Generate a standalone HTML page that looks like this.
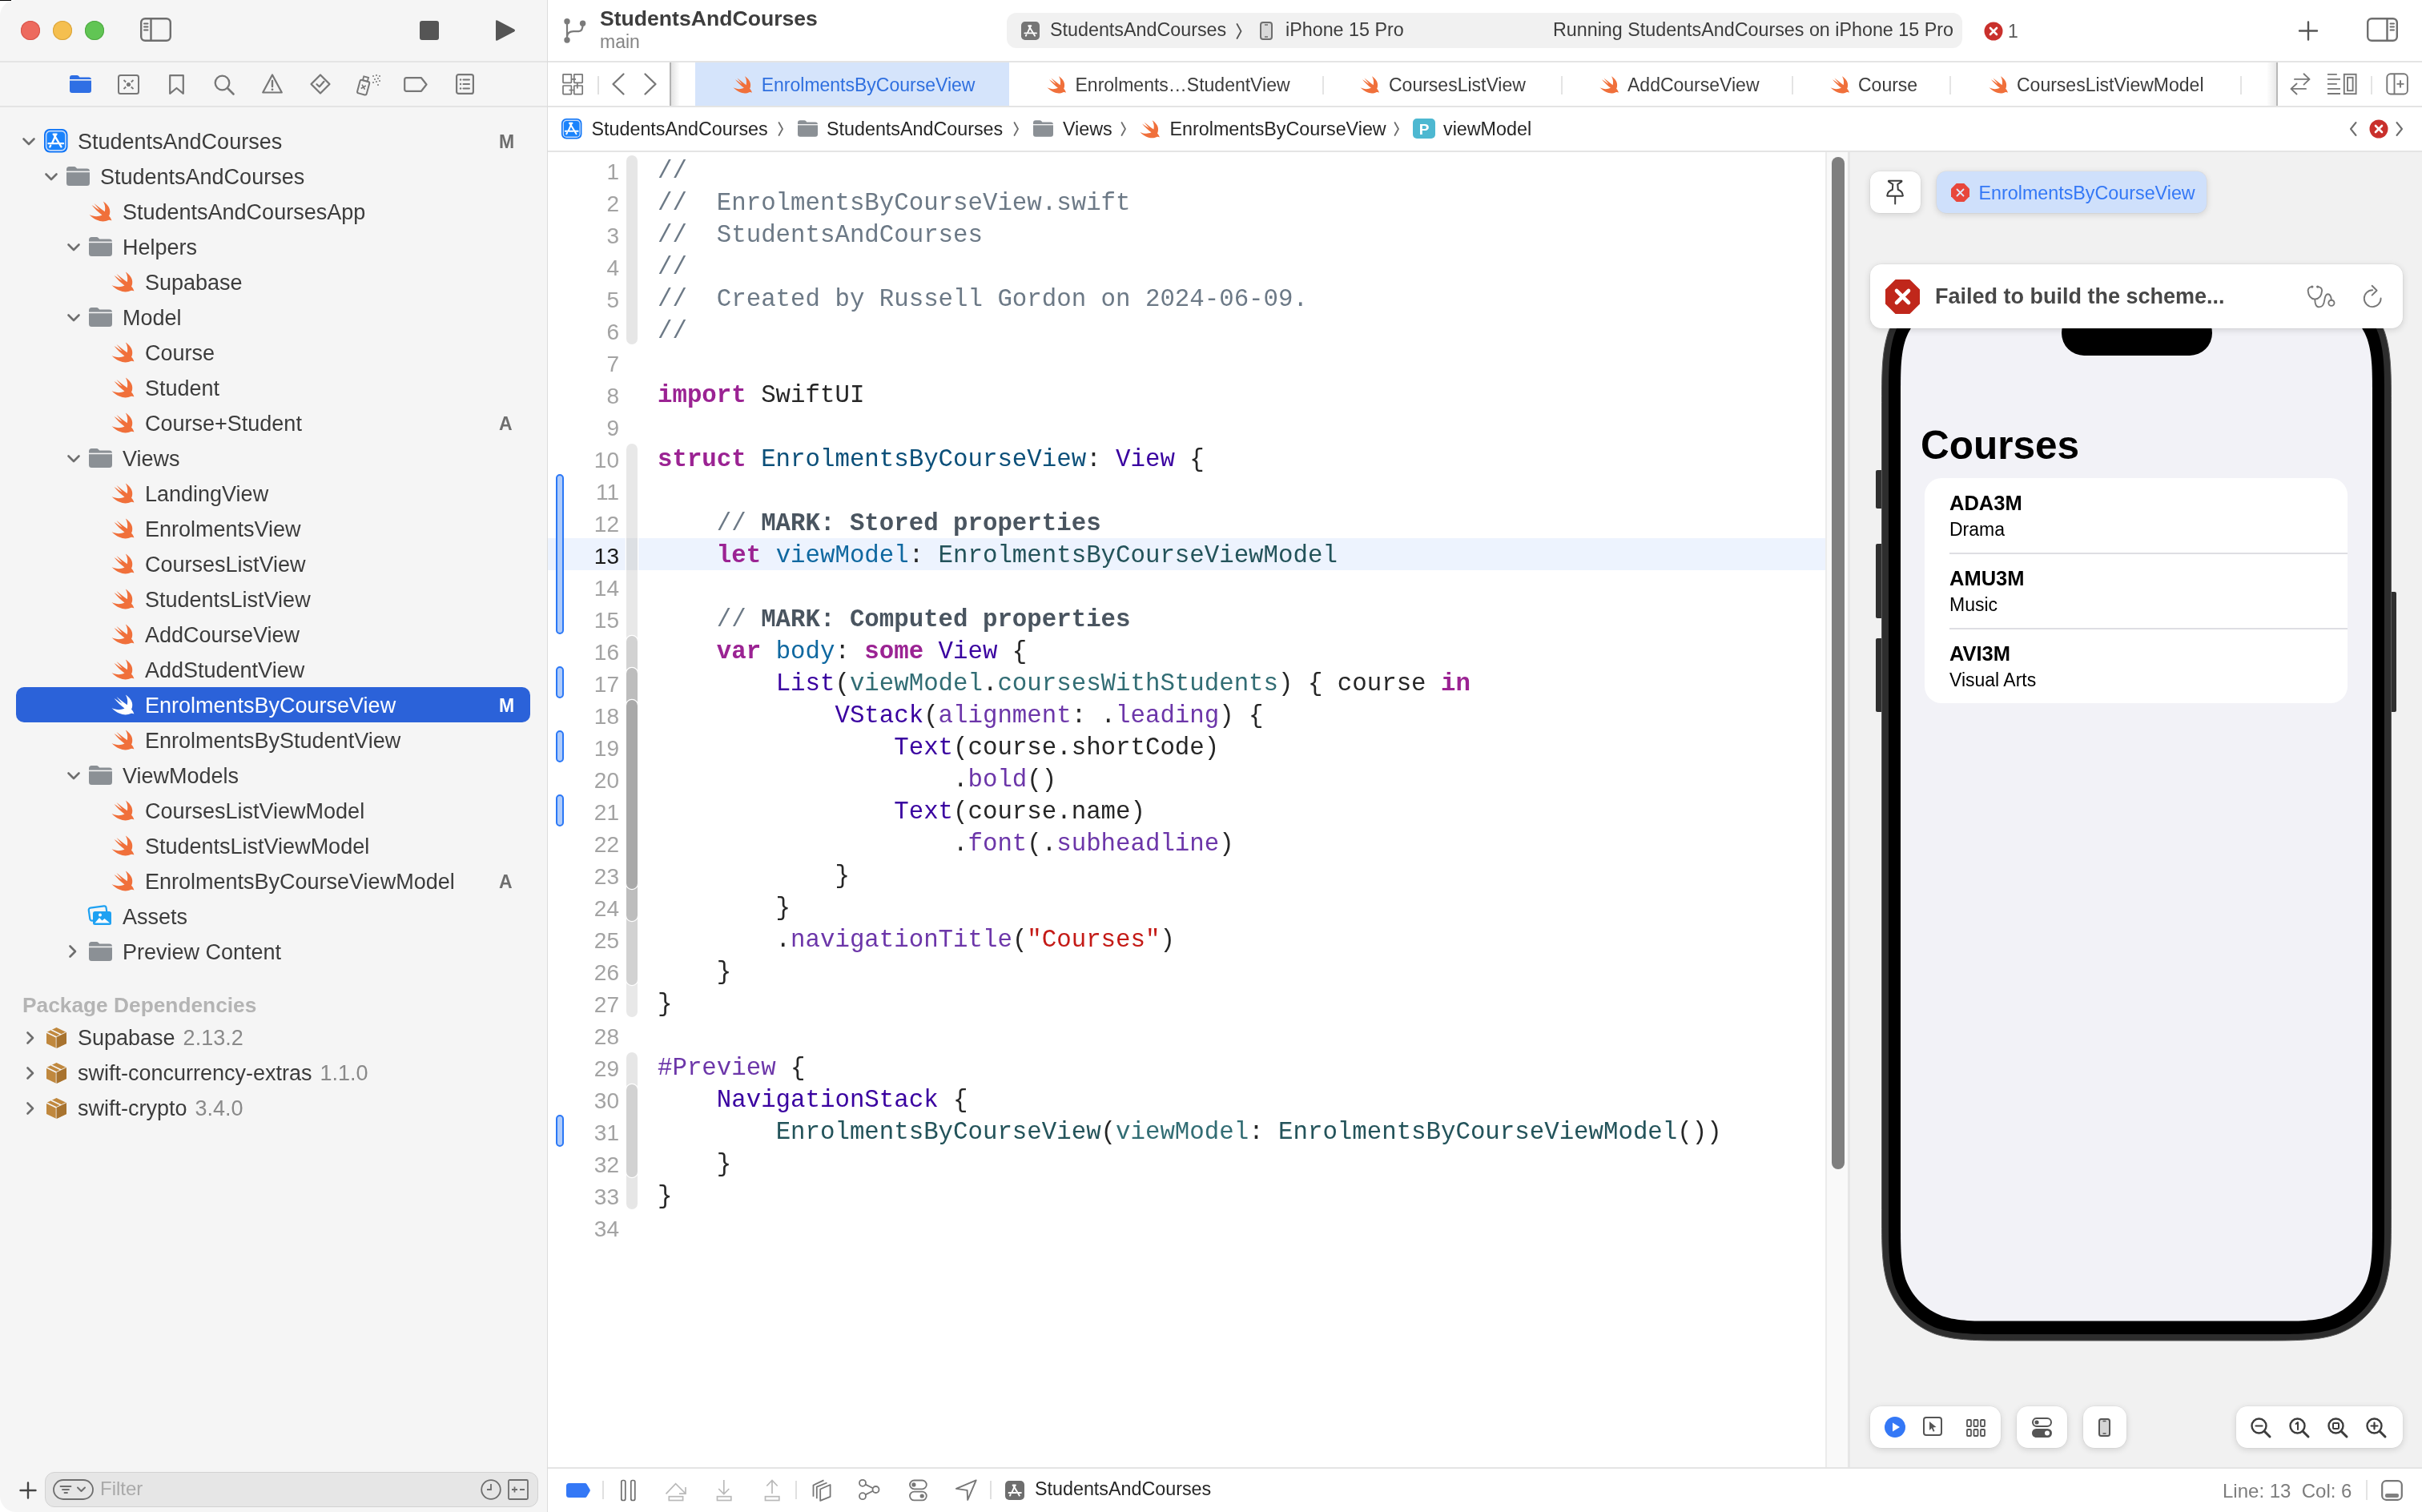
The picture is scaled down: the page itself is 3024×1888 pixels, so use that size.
<!DOCTYPE html><html><head><meta charset="utf-8"><style>
*{margin:0;padding:0;box-sizing:border-box}
html,body{width:3024px;height:1888px;overflow:hidden;background:#fff}
body{position:relative;font-family:"Liberation Sans", sans-serif;color:#262626;-webkit-font-smoothing:antialiased}
#root{position:absolute;left:0;top:0;width:3024px;height:1888px;will-change:transform}
.a{position:absolute}
.t{position:absolute;white-space:pre;font-family:"Liberation Sans", sans-serif}
.m{font-family:"Liberation Mono", monospace}
svg{position:absolute;overflow:visible}
</style></head><body><div id="root">
<div class="a" style="left:0px;top:0px;width:684px;height:1888px;background:#f5f5f5;border-top-left-radius:20px;border-bottom-left-radius:20px;"></div>
<div class="a" style="left:683px;top:0px;width:1px;height:1888px;background:#dcdcdc"></div>
<div class="a" style="left:0px;top:0px;width:14px;height:1px;background:#000"></div>
<div class="a" style="left:0px;top:76px;width:683px;height:2px;background:#e4e4e4"></div>
<div class="a" style="left:0px;top:132px;width:683px;height:2px;background:#e4e4e4"></div>
<div class="a" style="left:26px;top:26px;width:24px;height:24px;background:#ed6a5e;border-radius:50%;box-shadow:inset 0 0 0 1px #d6544a"></div>
<div class="a" style="left:66px;top:26px;width:24px;height:24px;background:#f5bf4f;border-radius:50%;box-shadow:inset 0 0 0 1px #d9a33b"></div>
<div class="a" style="left:106px;top:26px;width:24px;height:24px;background:#61c554;border-radius:50%;box-shadow:inset 0 0 0 1px #4fa843"></div>
<svg style="left:175px;top:22px;" width="39" height="30" viewBox="0 0 39 30"><rect x="1.2" y="1.2" width="36.6" height="27.6" rx="5" fill="none" stroke="#6e6e6e" stroke-width="2.4"/><path d="M13.5 1.5V28.5" stroke="#6e6e6e" stroke-width="2.4"/><path d="M5 7.5H9.5M5 11.5H9.5M5 15.5H9.5" stroke="#6e6e6e" stroke-width="2" stroke-linecap="round"/></svg>
<div class="a" style="left:524px;top:26px;width:24px;height:24px;background:#555;border-radius:3px"></div>
<svg style="left:617px;top:24px;" width="27" height="28" viewBox="0 0 27 28"><path d="M2 2.5Q2 0.5 4 1.5L25 12.5Q27 14 25 15.5L4 26.5Q2 27.5 2 25.5Z" fill="#555"/></svg>
<svg style="left:87px;top:94px;" width="27" height="22" viewBox="0 0 27 22"><path fill="#2f6fe4" d="M0 3Q0 0 3 0H9Q10.5 0 11.5 1.2L12.5 2.4H24Q27 2.4 27 5.4V19Q27 22 24 22H3Q0 22 0 19Z"/><rect y="5" width="27" height="1.6" fill="#f5f5f5"/></svg>
<svg style="left:147px;top:93px;" width="27" height="25" viewBox="0 0 27 25"><rect x="1" y="1" width="25" height="23" rx="2.5" fill="none" stroke="#777" stroke-width="2"/><path d="M7.5 7L19.5 18M19.5 7L7.5 18" stroke="#777" stroke-width="1.8"/><circle cx="13.5" cy="12.5" r="3" fill="#777"/><rect x="10" y="9" width="7" height="7" fill="#f5f5f5"/><circle cx="13.5" cy="12.5" r="2.6" fill="#777"/></svg>
<svg style="left:211px;top:93px;" width="19" height="25" viewBox="0 0 19 25"><path d="M1.2 1.2H17.8V23.8L9.5 17L1.2 23.8Z" fill="none" stroke="#777" stroke-width="2.2" stroke-linejoin="round"/></svg>
<svg style="left:267px;top:93px;" width="26" height="26" viewBox="0 0 26 26"><circle cx="10.5" cy="10.5" r="8.8" fill="none" stroke="#777" stroke-width="2.3"/><path d="M17 17L24.5 24.5" stroke="#777" stroke-width="2.6" stroke-linecap="round"/></svg>
<svg style="left:327px;top:92px;" width="26" height="25" viewBox="0 0 26 25"><path d="M13 1.5L24.8 23.5H1.2Z" fill="none" stroke="#777" stroke-width="2.2" stroke-linejoin="round"/><path d="M13 9V16" stroke="#777" stroke-width="2.4" stroke-linecap="round"/><circle cx="13" cy="19.8" r="1.4" fill="#777"/></svg>
<svg style="left:387px;top:92px;" width="26" height="26" viewBox="0 0 26 26"><path d="M13 1.5L24.5 13L13 24.5L1.5 13Z" fill="none" stroke="#777" stroke-width="2.2" stroke-linejoin="round"/><path d="M8.5 13.2L11.8 16.3L17.5 9.8" fill="none" stroke="#777" stroke-width="2.2" stroke-linecap="round" stroke-linejoin="round"/></svg>
<svg style="left:445px;top:92px;" width="31" height="27" viewBox="0 0 31 27"><g transform="rotate(15 10 16)"><rect x="3" y="9" width="12" height="17" rx="2" fill="none" stroke="#777" stroke-width="2"/><rect x="6" y="4" width="6" height="5" fill="none" stroke="#777" stroke-width="1.8"/><path d="M6.5 14.5L11.5 19.5M11.5 14.5L6.5 19.5" stroke="#777" stroke-width="1.6"/></g><g fill="#777"><circle cx="21" cy="3" r="1"/><circle cx="25" cy="2" r="1"/><circle cx="29" cy="3" r="1"/><circle cx="23" cy="7" r="1"/><circle cx="27" cy="6" r="1"/><circle cx="21" cy="11" r="1"/><circle cx="25" cy="10" r="1"/><circle cx="29" cy="9" r="1"/><circle cx="27" cy="14" r="1"/></g></svg>
<svg style="left:504px;top:96px;" width="30" height="19" viewBox="0 0 30 19"><path d="M3.5 1.2H22L28.5 9.5L22 17.8H3.5Q1.2 17.8 1.2 15.5V3.5Q1.2 1.2 3.5 1.2Z" fill="none" stroke="#777" stroke-width="2.2" stroke-linejoin="round"/></svg>
<svg style="left:569px;top:92px;" width="23" height="26" viewBox="0 0 23 26"><rect x="1.1" y="1.1" width="20.8" height="23.8" rx="2.5" fill="none" stroke="#777" stroke-width="2.2"/><g fill="#777"><circle cx="6" cy="7.5" r="1.2"/><circle cx="6" cy="13" r="1.2"/><circle cx="6" cy="18.5" r="1.2"/></g><path d="M9.5 7.5H17M9.5 13H17M9.5 18.5H17" stroke="#777" stroke-width="2" stroke-linecap="round"/></svg>
<svg style="left:28px;top:171.5px;" width="16" height="10" viewBox="0 0 16 10"><path d="M1.5 1.5L8 8L14.5 1.5" fill="none" stroke="#6e6e6e" stroke-width="2.6" stroke-linecap="round" stroke-linejoin="round"/></svg>
<svg style="left:55px;top:161px;" width="29" height="29" viewBox="0 0 29 29"><g transform="scale(1.0)"><rect x="0" y="0" width="29.5" height="29.5" rx="7" fill="#0b72f6"/><rect x="2.6" y="2.6" width="24.3" height="24.3" rx="5" fill="#1a83fc" stroke="#c4dbfb" stroke-width="1.6"/><g stroke="#fff" stroke-width="2.3" stroke-linecap="round" fill="none"><path d="M12.3 7.2L21.5 22.3"/><path d="M14.8 7.2L10.3 17.3"/><path d="M8.2 20.6L7.3 22.4"/><path d="M5.5 18.2H16.8M19 18.2H24"/><path d="M11.6 6.6H15.6"/></g></g></svg>
<div class="t" style="left:97px;top:164.1px;font-size:27px;line-height:27px;color:#3c3c3c;">StudentsAndCourses</div>
<div class="t" style="left:623px;top:165.5px;font-size:23px;line-height:23px;color:#6e6e6e;font-weight:bold">M</div>
<svg style="left:56px;top:215.5px;" width="16" height="10" viewBox="0 0 16 10"><path d="M1.5 1.5L8 8L14.5 1.5" fill="none" stroke="#6e6e6e" stroke-width="2.6" stroke-linecap="round" stroke-linejoin="round"/></svg>
<svg style="left:83px;top:208px;" width="29" height="24" viewBox="0 0 29 24"><path fill="#8b9095" d="M0 3.5Q0 0 3.5 0H9.5Q11 0 12 1.2L13.2 2.6H25.5Q29 2.6 29 6V20.5Q29 24 25.5 24H3.5Q0 24 0 20.5Z"/><rect x="0" y="5.6" width="29" height="1.6" fill="#f5f5f5"/></svg>
<div class="t" style="left:125px;top:208.1px;font-size:27px;line-height:27px;color:#3c3c3c;">StudentsAndCourses</div>
<svg style="left:111px;top:250.8px;" width="28.5" height="25.5" viewBox="0 0 28.5 25.5"><path fill="#f0703b" d="M17.8 0.4C22.5 3.5 27 8.5 26.2 14.5C26 16.5 25.5 18 25 18.8C26.8 20.5 27.8 22.5 28.4 24.6C27 23.6 25.5 23.4 24.2 23.9C19 26.5 10 26.5 0.5 17C5.5 19.5 11.5 20 16.5 17.5C12 14 7 9.5 3.5 5C7.5 7.5 11 10 13.5 11.5C11 8.5 8.5 5.5 6.5 3C11 6.5 16 10.5 19.8 13.2C20.8 9 20.2 4 17.8 0.4Z"/></svg>
<div class="t" style="left:153px;top:252.1px;font-size:27px;line-height:27px;color:#3c3c3c;">StudentsAndCoursesApp</div>
<svg style="left:84px;top:303.5px;" width="16" height="10" viewBox="0 0 16 10"><path d="M1.5 1.5L8 8L14.5 1.5" fill="none" stroke="#6e6e6e" stroke-width="2.6" stroke-linecap="round" stroke-linejoin="round"/></svg>
<svg style="left:111px;top:296px;" width="29" height="24" viewBox="0 0 29 24"><path fill="#8b9095" d="M0 3.5Q0 0 3.5 0H9.5Q11 0 12 1.2L13.2 2.6H25.5Q29 2.6 29 6V20.5Q29 24 25.5 24H3.5Q0 24 0 20.5Z"/><rect x="0" y="5.6" width="29" height="1.6" fill="#f5f5f5"/></svg>
<div class="t" style="left:153px;top:296.1px;font-size:27px;line-height:27px;color:#3c3c3c;">Helpers</div>
<svg style="left:139px;top:338.8px;" width="28.5" height="25.5" viewBox="0 0 28.5 25.5"><path fill="#f0703b" d="M17.8 0.4C22.5 3.5 27 8.5 26.2 14.5C26 16.5 25.5 18 25 18.8C26.8 20.5 27.8 22.5 28.4 24.6C27 23.6 25.5 23.4 24.2 23.9C19 26.5 10 26.5 0.5 17C5.5 19.5 11.5 20 16.5 17.5C12 14 7 9.5 3.5 5C7.5 7.5 11 10 13.5 11.5C11 8.5 8.5 5.5 6.5 3C11 6.5 16 10.5 19.8 13.2C20.8 9 20.2 4 17.8 0.4Z"/></svg>
<div class="t" style="left:181px;top:340.1px;font-size:27px;line-height:27px;color:#3c3c3c;">Supabase</div>
<svg style="left:84px;top:391.5px;" width="16" height="10" viewBox="0 0 16 10"><path d="M1.5 1.5L8 8L14.5 1.5" fill="none" stroke="#6e6e6e" stroke-width="2.6" stroke-linecap="round" stroke-linejoin="round"/></svg>
<svg style="left:111px;top:384px;" width="29" height="24" viewBox="0 0 29 24"><path fill="#8b9095" d="M0 3.5Q0 0 3.5 0H9.5Q11 0 12 1.2L13.2 2.6H25.5Q29 2.6 29 6V20.5Q29 24 25.5 24H3.5Q0 24 0 20.5Z"/><rect x="0" y="5.6" width="29" height="1.6" fill="#f5f5f5"/></svg>
<div class="t" style="left:153px;top:384.1px;font-size:27px;line-height:27px;color:#3c3c3c;">Model</div>
<svg style="left:139px;top:426.8px;" width="28.5" height="25.5" viewBox="0 0 28.5 25.5"><path fill="#f0703b" d="M17.8 0.4C22.5 3.5 27 8.5 26.2 14.5C26 16.5 25.5 18 25 18.8C26.8 20.5 27.8 22.5 28.4 24.6C27 23.6 25.5 23.4 24.2 23.9C19 26.5 10 26.5 0.5 17C5.5 19.5 11.5 20 16.5 17.5C12 14 7 9.5 3.5 5C7.5 7.5 11 10 13.5 11.5C11 8.5 8.5 5.5 6.5 3C11 6.5 16 10.5 19.8 13.2C20.8 9 20.2 4 17.8 0.4Z"/></svg>
<div class="t" style="left:181px;top:428.1px;font-size:27px;line-height:27px;color:#3c3c3c;">Course</div>
<svg style="left:139px;top:470.8px;" width="28.5" height="25.5" viewBox="0 0 28.5 25.5"><path fill="#f0703b" d="M17.8 0.4C22.5 3.5 27 8.5 26.2 14.5C26 16.5 25.5 18 25 18.8C26.8 20.5 27.8 22.5 28.4 24.6C27 23.6 25.5 23.4 24.2 23.9C19 26.5 10 26.5 0.5 17C5.5 19.5 11.5 20 16.5 17.5C12 14 7 9.5 3.5 5C7.5 7.5 11 10 13.5 11.5C11 8.5 8.5 5.5 6.5 3C11 6.5 16 10.5 19.8 13.2C20.8 9 20.2 4 17.8 0.4Z"/></svg>
<div class="t" style="left:181px;top:472.1px;font-size:27px;line-height:27px;color:#3c3c3c;">Student</div>
<svg style="left:139px;top:514.8px;" width="28.5" height="25.5" viewBox="0 0 28.5 25.5"><path fill="#f0703b" d="M17.8 0.4C22.5 3.5 27 8.5 26.2 14.5C26 16.5 25.5 18 25 18.8C26.8 20.5 27.8 22.5 28.4 24.6C27 23.6 25.5 23.4 24.2 23.9C19 26.5 10 26.5 0.5 17C5.5 19.5 11.5 20 16.5 17.5C12 14 7 9.5 3.5 5C7.5 7.5 11 10 13.5 11.5C11 8.5 8.5 5.5 6.5 3C11 6.5 16 10.5 19.8 13.2C20.8 9 20.2 4 17.8 0.4Z"/></svg>
<div class="t" style="left:181px;top:516.1px;font-size:27px;line-height:27px;color:#3c3c3c;">Course+Student</div>
<div class="t" style="left:623px;top:517.5px;font-size:23px;line-height:23px;color:#6e6e6e;font-weight:bold">A</div>
<svg style="left:84px;top:567.5px;" width="16" height="10" viewBox="0 0 16 10"><path d="M1.5 1.5L8 8L14.5 1.5" fill="none" stroke="#6e6e6e" stroke-width="2.6" stroke-linecap="round" stroke-linejoin="round"/></svg>
<svg style="left:111px;top:560px;" width="29" height="24" viewBox="0 0 29 24"><path fill="#8b9095" d="M0 3.5Q0 0 3.5 0H9.5Q11 0 12 1.2L13.2 2.6H25.5Q29 2.6 29 6V20.5Q29 24 25.5 24H3.5Q0 24 0 20.5Z"/><rect x="0" y="5.6" width="29" height="1.6" fill="#f5f5f5"/></svg>
<div class="t" style="left:153px;top:560.1px;font-size:27px;line-height:27px;color:#3c3c3c;">Views</div>
<svg style="left:139px;top:602.8px;" width="28.5" height="25.5" viewBox="0 0 28.5 25.5"><path fill="#f0703b" d="M17.8 0.4C22.5 3.5 27 8.5 26.2 14.5C26 16.5 25.5 18 25 18.8C26.8 20.5 27.8 22.5 28.4 24.6C27 23.6 25.5 23.4 24.2 23.9C19 26.5 10 26.5 0.5 17C5.5 19.5 11.5 20 16.5 17.5C12 14 7 9.5 3.5 5C7.5 7.5 11 10 13.5 11.5C11 8.5 8.5 5.5 6.5 3C11 6.5 16 10.5 19.8 13.2C20.8 9 20.2 4 17.8 0.4Z"/></svg>
<div class="t" style="left:181px;top:604.1px;font-size:27px;line-height:27px;color:#3c3c3c;">LandingView</div>
<svg style="left:139px;top:646.8px;" width="28.5" height="25.5" viewBox="0 0 28.5 25.5"><path fill="#f0703b" d="M17.8 0.4C22.5 3.5 27 8.5 26.2 14.5C26 16.5 25.5 18 25 18.8C26.8 20.5 27.8 22.5 28.4 24.6C27 23.6 25.5 23.4 24.2 23.9C19 26.5 10 26.5 0.5 17C5.5 19.5 11.5 20 16.5 17.5C12 14 7 9.5 3.5 5C7.5 7.5 11 10 13.5 11.5C11 8.5 8.5 5.5 6.5 3C11 6.5 16 10.5 19.8 13.2C20.8 9 20.2 4 17.8 0.4Z"/></svg>
<div class="t" style="left:181px;top:648.1px;font-size:27px;line-height:27px;color:#3c3c3c;">EnrolmentsView</div>
<svg style="left:139px;top:690.8px;" width="28.5" height="25.5" viewBox="0 0 28.5 25.5"><path fill="#f0703b" d="M17.8 0.4C22.5 3.5 27 8.5 26.2 14.5C26 16.5 25.5 18 25 18.8C26.8 20.5 27.8 22.5 28.4 24.6C27 23.6 25.5 23.4 24.2 23.9C19 26.5 10 26.5 0.5 17C5.5 19.5 11.5 20 16.5 17.5C12 14 7 9.5 3.5 5C7.5 7.5 11 10 13.5 11.5C11 8.5 8.5 5.5 6.5 3C11 6.5 16 10.5 19.8 13.2C20.8 9 20.2 4 17.8 0.4Z"/></svg>
<div class="t" style="left:181px;top:692.1px;font-size:27px;line-height:27px;color:#3c3c3c;">CoursesListView</div>
<svg style="left:139px;top:734.8px;" width="28.5" height="25.5" viewBox="0 0 28.5 25.5"><path fill="#f0703b" d="M17.8 0.4C22.5 3.5 27 8.5 26.2 14.5C26 16.5 25.5 18 25 18.8C26.8 20.5 27.8 22.5 28.4 24.6C27 23.6 25.5 23.4 24.2 23.9C19 26.5 10 26.5 0.5 17C5.5 19.5 11.5 20 16.5 17.5C12 14 7 9.5 3.5 5C7.5 7.5 11 10 13.5 11.5C11 8.5 8.5 5.5 6.5 3C11 6.5 16 10.5 19.8 13.2C20.8 9 20.2 4 17.8 0.4Z"/></svg>
<div class="t" style="left:181px;top:736.1px;font-size:27px;line-height:27px;color:#3c3c3c;">StudentsListView</div>
<svg style="left:139px;top:778.8px;" width="28.5" height="25.5" viewBox="0 0 28.5 25.5"><path fill="#f0703b" d="M17.8 0.4C22.5 3.5 27 8.5 26.2 14.5C26 16.5 25.5 18 25 18.8C26.8 20.5 27.8 22.5 28.4 24.6C27 23.6 25.5 23.4 24.2 23.9C19 26.5 10 26.5 0.5 17C5.5 19.5 11.5 20 16.5 17.5C12 14 7 9.5 3.5 5C7.5 7.5 11 10 13.5 11.5C11 8.5 8.5 5.5 6.5 3C11 6.5 16 10.5 19.8 13.2C20.8 9 20.2 4 17.8 0.4Z"/></svg>
<div class="t" style="left:181px;top:780.1px;font-size:27px;line-height:27px;color:#3c3c3c;">AddCourseView</div>
<svg style="left:139px;top:822.8px;" width="28.5" height="25.5" viewBox="0 0 28.5 25.5"><path fill="#f0703b" d="M17.8 0.4C22.5 3.5 27 8.5 26.2 14.5C26 16.5 25.5 18 25 18.8C26.8 20.5 27.8 22.5 28.4 24.6C27 23.6 25.5 23.4 24.2 23.9C19 26.5 10 26.5 0.5 17C5.5 19.5 11.5 20 16.5 17.5C12 14 7 9.5 3.5 5C7.5 7.5 11 10 13.5 11.5C11 8.5 8.5 5.5 6.5 3C11 6.5 16 10.5 19.8 13.2C20.8 9 20.2 4 17.8 0.4Z"/></svg>
<div class="t" style="left:181px;top:824.1px;font-size:27px;line-height:27px;color:#3c3c3c;">AddStudentView</div>
<div class="a" style="left:20px;top:858px;width:642px;height:44px;background:#2b62d9;border-radius:10px"></div>
<svg style="left:139px;top:866.8px;" width="28.5" height="25.5" viewBox="0 0 28.5 25.5"><path fill="#fff" d="M17.8 0.4C22.5 3.5 27 8.5 26.2 14.5C26 16.5 25.5 18 25 18.8C26.8 20.5 27.8 22.5 28.4 24.6C27 23.6 25.5 23.4 24.2 23.9C19 26.5 10 26.5 0.5 17C5.5 19.5 11.5 20 16.5 17.5C12 14 7 9.5 3.5 5C7.5 7.5 11 10 13.5 11.5C11 8.5 8.5 5.5 6.5 3C11 6.5 16 10.5 19.8 13.2C20.8 9 20.2 4 17.8 0.4Z"/></svg>
<div class="t" style="left:181px;top:868.1px;font-size:27px;line-height:27px;color:#fff;">EnrolmentsByCourseView</div>
<div class="t" style="left:623px;top:869.5px;font-size:23px;line-height:23px;color:#fff;font-weight:bold">M</div>
<svg style="left:139px;top:910.8px;" width="28.5" height="25.5" viewBox="0 0 28.5 25.5"><path fill="#f0703b" d="M17.8 0.4C22.5 3.5 27 8.5 26.2 14.5C26 16.5 25.5 18 25 18.8C26.8 20.5 27.8 22.5 28.4 24.6C27 23.6 25.5 23.4 24.2 23.9C19 26.5 10 26.5 0.5 17C5.5 19.5 11.5 20 16.5 17.5C12 14 7 9.5 3.5 5C7.5 7.5 11 10 13.5 11.5C11 8.5 8.5 5.5 6.5 3C11 6.5 16 10.5 19.8 13.2C20.8 9 20.2 4 17.8 0.4Z"/></svg>
<div class="t" style="left:181px;top:912.1px;font-size:27px;line-height:27px;color:#3c3c3c;">EnrolmentsByStudentView</div>
<svg style="left:84px;top:963.5px;" width="16" height="10" viewBox="0 0 16 10"><path d="M1.5 1.5L8 8L14.5 1.5" fill="none" stroke="#6e6e6e" stroke-width="2.6" stroke-linecap="round" stroke-linejoin="round"/></svg>
<svg style="left:111px;top:956px;" width="29" height="24" viewBox="0 0 29 24"><path fill="#8b9095" d="M0 3.5Q0 0 3.5 0H9.5Q11 0 12 1.2L13.2 2.6H25.5Q29 2.6 29 6V20.5Q29 24 25.5 24H3.5Q0 24 0 20.5Z"/><rect x="0" y="5.6" width="29" height="1.6" fill="#f5f5f5"/></svg>
<div class="t" style="left:153px;top:956.1px;font-size:27px;line-height:27px;color:#3c3c3c;">ViewModels</div>
<svg style="left:139px;top:998.8px;" width="28.5" height="25.5" viewBox="0 0 28.5 25.5"><path fill="#f0703b" d="M17.8 0.4C22.5 3.5 27 8.5 26.2 14.5C26 16.5 25.5 18 25 18.8C26.8 20.5 27.8 22.5 28.4 24.6C27 23.6 25.5 23.4 24.2 23.9C19 26.5 10 26.5 0.5 17C5.5 19.5 11.5 20 16.5 17.5C12 14 7 9.5 3.5 5C7.5 7.5 11 10 13.5 11.5C11 8.5 8.5 5.5 6.5 3C11 6.5 16 10.5 19.8 13.2C20.8 9 20.2 4 17.8 0.4Z"/></svg>
<div class="t" style="left:181px;top:1000.1px;font-size:27px;line-height:27px;color:#3c3c3c;">CoursesListViewModel</div>
<svg style="left:139px;top:1042.8px;" width="28.5" height="25.5" viewBox="0 0 28.5 25.5"><path fill="#f0703b" d="M17.8 0.4C22.5 3.5 27 8.5 26.2 14.5C26 16.5 25.5 18 25 18.8C26.8 20.5 27.8 22.5 28.4 24.6C27 23.6 25.5 23.4 24.2 23.9C19 26.5 10 26.5 0.5 17C5.5 19.5 11.5 20 16.5 17.5C12 14 7 9.5 3.5 5C7.5 7.5 11 10 13.5 11.5C11 8.5 8.5 5.5 6.5 3C11 6.5 16 10.5 19.8 13.2C20.8 9 20.2 4 17.8 0.4Z"/></svg>
<div class="t" style="left:181px;top:1044.1px;font-size:27px;line-height:27px;color:#3c3c3c;">StudentsListViewModel</div>
<svg style="left:139px;top:1086.8px;" width="28.5" height="25.5" viewBox="0 0 28.5 25.5"><path fill="#f0703b" d="M17.8 0.4C22.5 3.5 27 8.5 26.2 14.5C26 16.5 25.5 18 25 18.8C26.8 20.5 27.8 22.5 28.4 24.6C27 23.6 25.5 23.4 24.2 23.9C19 26.5 10 26.5 0.5 17C5.5 19.5 11.5 20 16.5 17.5C12 14 7 9.5 3.5 5C7.5 7.5 11 10 13.5 11.5C11 8.5 8.5 5.5 6.5 3C11 6.5 16 10.5 19.8 13.2C20.8 9 20.2 4 17.8 0.4Z"/></svg>
<div class="t" style="left:181px;top:1088.1px;font-size:27px;line-height:27px;color:#3c3c3c;">EnrolmentsByCourseViewModel</div>
<div class="t" style="left:623px;top:1089.5px;font-size:23px;line-height:23px;color:#6e6e6e;font-weight:bold">A</div>
<svg style="left:110px;top:1131px;" width="31" height="26" viewBox="0 0 31 26"><rect x="1.5" y="1.5" width="22" height="16" rx="2.5" transform="rotate(-8 12 10)" fill="none" stroke="#1ea1f2" stroke-width="2.2"/><rect x="6" y="7" width="23" height="17" rx="2.5" fill="#1ea1f2"/><path d="M8.5 21.5L14 15L17.5 18.5L20.5 16L27 21.5Z" fill="#fff"/><circle cx="15" cy="11.5" r="2" fill="#fff"/></svg>
<div class="t" style="left:153px;top:1132.1px;font-size:27px;line-height:27px;color:#3c3c3c;">Assets</div>
<svg style="left:86px;top:1180px;" width="10" height="16" viewBox="0 0 10 16"><path d="M1.5 1.5L8 8L1.5 14.5" fill="none" stroke="#6e6e6e" stroke-width="2.6" stroke-linecap="round" stroke-linejoin="round"/></svg>
<svg style="left:111px;top:1176px;" width="29" height="24" viewBox="0 0 29 24"><path fill="#8b9095" d="M0 3.5Q0 0 3.5 0H9.5Q11 0 12 1.2L13.2 2.6H25.5Q29 2.6 29 6V20.5Q29 24 25.5 24H3.5Q0 24 0 20.5Z"/><rect x="0" y="5.6" width="29" height="1.6" fill="#f5f5f5"/></svg>
<div class="t" style="left:153px;top:1176.1px;font-size:27px;line-height:27px;color:#3c3c3c;">Preview Content</div>
<div class="t" style="left:28px;top:1241.7px;font-size:26.3px;line-height:26.3px;color:#b4b4b4;font-weight:bold">Package Dependencies</div>
<svg style="left:33px;top:1288px;" width="10" height="16" viewBox="0 0 10 16"><path d="M1.5 1.5L8 8L1.5 14.5" fill="none" stroke="#6e6e6e" stroke-width="2.6" stroke-linecap="round" stroke-linejoin="round"/></svg>
<svg style="left:57px;top:1282px;" width="27" height="28" viewBox="0 0 27 28"><path d="M13.5 1L26 7V21L13.5 27L1 21V7Z" fill="#c0883e"/><path d="M1 7L13.5 13L26 7M13.5 13V27" fill="none" stroke="#f5f5f5" stroke-width="1.6"/><path d="M7 4L19.5 10V14" fill="none" stroke="#f5f5f5" stroke-width="1.6"/><path d="M13.5 13L26 7V21L13.5 27Z" fill="#a8732f"/></svg>
<div class="t" style="left:97px;top:1283.1px;font-size:27px;line-height:27px;color:#3c3c3c;">Supabase</div>
<div class="t" style="left:228.609375px;top:1283.1px;font-size:27px;line-height:27px;color:#8a8a8a;">2.13.2</div>
<svg style="left:33px;top:1332px;" width="10" height="16" viewBox="0 0 10 16"><path d="M1.5 1.5L8 8L1.5 14.5" fill="none" stroke="#6e6e6e" stroke-width="2.6" stroke-linecap="round" stroke-linejoin="round"/></svg>
<svg style="left:57px;top:1326px;" width="27" height="28" viewBox="0 0 27 28"><path d="M13.5 1L26 7V21L13.5 27L1 21V7Z" fill="#c0883e"/><path d="M1 7L13.5 13L26 7M13.5 13V27" fill="none" stroke="#f5f5f5" stroke-width="1.6"/><path d="M7 4L19.5 10V14" fill="none" stroke="#f5f5f5" stroke-width="1.6"/><path d="M13.5 13L26 7V21L13.5 27Z" fill="#a8732f"/></svg>
<div class="t" style="left:97px;top:1327.1px;font-size:27px;line-height:27px;color:#3c3c3c;">swift-concurrency-extras</div>
<div class="t" style="left:399.53125px;top:1327.1px;font-size:27px;line-height:27px;color:#8a8a8a;">1.1.0</div>
<svg style="left:33px;top:1376px;" width="10" height="16" viewBox="0 0 10 16"><path d="M1.5 1.5L8 8L1.5 14.5" fill="none" stroke="#6e6e6e" stroke-width="2.6" stroke-linecap="round" stroke-linejoin="round"/></svg>
<svg style="left:57px;top:1370px;" width="27" height="28" viewBox="0 0 27 28"><path d="M13.5 1L26 7V21L13.5 27L1 21V7Z" fill="#c0883e"/><path d="M1 7L13.5 13L26 7M13.5 13V27" fill="none" stroke="#f5f5f5" stroke-width="1.6"/><path d="M7 4L19.5 10V14" fill="none" stroke="#f5f5f5" stroke-width="1.6"/><path d="M13.5 13L26 7V21L13.5 27Z" fill="#a8732f"/></svg>
<div class="t" style="left:97px;top:1371.1px;font-size:27px;line-height:27px;color:#3c3c3c;">swift-crypto</div>
<div class="t" style="left:243.5px;top:1371.1px;font-size:27px;line-height:27px;color:#8a8a8a;">3.4.0</div>
<svg style="left:24px;top:1850px;" width="22" height="22" viewBox="0 0 22 22"><path d="M11 1.5V20.5M1.5 11H20.5" stroke="#444" stroke-width="2.4" stroke-linecap="round"/></svg>
<div class="a" style="left:56px;top:1838px;width:616px;height:44px;background:#e6e6e6;border:1px solid #d2d2d2;border-radius:12px"></div>
<svg style="left:66px;top:1847px;" width="51" height="26" viewBox="0 0 51 26"><rect x="1" y="1" width="49" height="24" rx="12" fill="none" stroke="#6e6e6e" stroke-width="1.8"/><path d="M9.5 9H22.5M12 13H20M14.5 17H18" stroke="#6e6e6e" stroke-width="1.8" stroke-linecap="round"/><path d="M31 10.5L35.5 15L40 10.5" fill="none" stroke="#6e6e6e" stroke-width="2" stroke-linecap="round" stroke-linejoin="round"/></svg>
<div class="t" style="left:125px;top:1846.7px;font-size:24px;line-height:24px;color:#a9a9a9;">Filter</div>
<svg style="left:600px;top:1847px;" width="26" height="26" viewBox="0 0 26 26"><circle cx="13" cy="13" r="11.8" fill="none" stroke="#6e6e6e" stroke-width="1.8"/><path d="M13 6V13H8" fill="none" stroke="#6e6e6e" stroke-width="1.8"/></svg>
<svg style="left:634px;top:1847px;" width="26" height="26" viewBox="0 0 26 26"><rect x="1" y="1" width="24" height="24" rx="1.5" fill="none" stroke="#6e6e6e" stroke-width="1.8"/><path d="M5 13H12M8.5 9.5V16.5M15 13H21" stroke="#6e6e6e" stroke-width="1.8"/></svg>
<div class="a" style="left:684px;top:0px;width:2340px;height:76px;background:#fff"></div>
<div class="a" style="left:684px;top:76px;width:2340px;height:2px;background:#e4e4e4"></div>
<svg style="left:702px;top:22px;" width="31" height="32" viewBox="0 0 31 32"><circle cx="6" cy="4.8" r="3.7" fill="#7b7b7b"/><circle cx="6" cy="28" r="3.7" fill="#7b7b7b"/><circle cx="25.6" cy="7.2" r="3.7" fill="#7b7b7b"/><path d="M6 5V28M6 24Q6.5 17.5 14 17.2H20.5Q25.8 17 25.6 8" fill="none" stroke="#7b7b7b" stroke-width="2.2"/></svg>
<div class="t" style="left:749px;top:9.5px;font-size:26.6px;line-height:26.6px;color:#3d3d3d;font-weight:bold">StudentsAndCourses</div>
<div class="t" style="left:749px;top:40.5px;font-size:23px;line-height:23px;color:#858585;">main</div>
<div class="a" style="left:1257px;top:16px;width:1193px;height:44px;background:#f1f1f1;border-radius:12px"></div>
<svg style="left:1275px;top:27px;" width="23" height="23" viewBox="0 0 23 23"><g transform="scale(0.7931034482758621)"><rect x="0" y="0" width="29" height="29" rx="6" fill="#757575"/><g stroke="#fff" stroke-width="2.3" stroke-linecap="round" fill="none"><path d="M12.3 7.2L21.5 22.3"/><path d="M14.8 7.2L10.3 17.3"/><path d="M8.2 20.6L7.3 22.4"/><path d="M5.5 18.2H16.8M19 18.2H24"/><path d="M11.6 6.6H15.6"/></g></g></svg>
<div class="t" style="left:1311px;top:26.3px;font-size:23.3px;line-height:23.3px;color:#3c3c3c;">StudentsAndCourses</div>
<svg style="left:1543px;top:28px;" width="8" height="22" viewBox="0 0 8 22"><path d="M1.5 2L6.5 11L1.5 20" fill="none" stroke="#555" stroke-width="1.8" stroke-linecap="round"/></svg>
<svg style="left:1573px;top:27px;" width="16" height="23" viewBox="0 0 16 23"><rect x="1" y="1" width="14" height="21" rx="3" fill="#d9d9d9" stroke="#6e6e6e" stroke-width="2"/><path d="M6 4H10M6 19H10" stroke="#6e6e6e" stroke-width="1.4"/></svg>
<div class="t" style="left:1605px;top:26.3px;font-size:23.3px;line-height:23.3px;color:#3c3c3c;">iPhone 15 Pro</div>
<div class="t" style="left:1939px;top:26.3px;font-size:23.3px;line-height:23.3px;color:#3c3c3c;">Running StudentsAndCourses on iPhone 15 Pro</div>
<svg style="left:2477px;top:27px;" width="24" height="24" viewBox="0 0 24 24"><circle cx="12" cy="12" r="11.5" fill="#c9302c"/><path d="M8 8L16 16M16 8L8 16" stroke="#fff" stroke-width="2.6" stroke-linecap="round"/></svg>
<div class="t" style="left:2507px;top:27.5px;font-size:23px;line-height:23px;color:#5a5a5a;">1</div>
<svg style="left:2869px;top:26px;" width="26" height="25" viewBox="0 0 26 25"><path d="M13 1.5V23.5M2 12.5H24" stroke="#555" stroke-width="2.4" stroke-linecap="round"/></svg>
<svg style="left:2955px;top:22px;" width="39" height="30" viewBox="0 0 39 30"><rect x="1.2" y="1.2" width="36.6" height="27.6" rx="5" fill="none" stroke="#6e6e6e" stroke-width="2.4"/><path d="M25.5 1.5V28.5" stroke="#6e6e6e" stroke-width="2.4"/><path d="M29.5 7.5H34M29.5 11.5H34M29.5 15.5H34" stroke="#6e6e6e" stroke-width="2" stroke-linecap="round"/></svg>
<div class="a" style="left:684px;top:78px;width:2340px;height:54px;background:#fff"></div>
<div class="a" style="left:684px;top:132px;width:2340px;height:2px;background:#e4e4e4"></div>
<svg style="left:702px;top:92px;" width="27" height="27" viewBox="0 0 27 27"><g fill="none" stroke="#777" stroke-width="1.7"><rect x="1" y="0.8" width="10.4" height="10.6" rx="0.6"/><rect x="14.8" y="0.8" width="10.4" height="10.6" rx="0.6"/><rect x="1" y="15" width="10.4" height="10.6" rx="0.6"/><rect x="14.8" y="15" width="10.4" height="10.6" rx="0.6"/><path d="M11.4 6.8H17M18.8 11.4V18.5M14.8 20.5H8.5"/></g></svg>
<div class="a" style="left:746px;top:95px;width:2px;height:23px;background:#e0e0e0"></div>
<svg style="left:764px;top:91px;" width="17" height="28" viewBox="0 0 17 28"><path d="M14.5 1.5L1.5 14L14.5 26.5" fill="none" stroke="#777" stroke-width="2.3" stroke-linecap="round" stroke-linejoin="round"/></svg>
<svg style="left:804px;top:91px;" width="17" height="28" viewBox="0 0 17 28"><path d="M1.5 1.5L14.5 14L1.5 26.5" fill="none" stroke="#777" stroke-width="2.3" stroke-linecap="round" stroke-linejoin="round"/></svg>
<div class="a" style="left:836px;top:78px;width:2px;height:54px;background:#b3b3b3"></div>
<div class="a" style="left:838px;top:78px;width:11px;height:54px;background:linear-gradient(90deg,rgba(0,0,0,0.11),rgba(0,0,0,0))"></div>
<div class="a" style="left:868px;top:78px;width:392px;height:54px;background:#d5e4fb"></div>
<svg style="left:915px;top:94.5px;" width="24" height="21.5" viewBox="0 0 28.5 25.5"><path fill="#f0703b" d="M17.8 0.4C22.5 3.5 27 8.5 26.2 14.5C26 16.5 25.5 18 25 18.8C26.8 20.5 27.8 22.5 28.4 24.6C27 23.6 25.5 23.4 24.2 23.9C19 26.5 10 26.5 0.5 17C5.5 19.5 11.5 20 16.5 17.5C12 14 7 9.5 3.5 5C7.5 7.5 11 10 13.5 11.5C11 8.5 8.5 5.5 6.5 3C11 6.5 16 10.5 19.8 13.2C20.8 9 20.2 4 17.8 0.4Z"/></svg>
<div class="t" style="left:950.7px;top:94.5px;font-size:23px;line-height:23px;color:#2f6fdf;">EnrolmentsByCourseView</div>
<svg style="left:1307px;top:94.5px;" width="24" height="21.5" viewBox="0 0 28.5 25.5"><path fill="#f0703b" d="M17.8 0.4C22.5 3.5 27 8.5 26.2 14.5C26 16.5 25.5 18 25 18.8C26.8 20.5 27.8 22.5 28.4 24.6C27 23.6 25.5 23.4 24.2 23.9C19 26.5 10 26.5 0.5 17C5.5 19.5 11.5 20 16.5 17.5C12 14 7 9.5 3.5 5C7.5 7.5 11 10 13.5 11.5C11 8.5 8.5 5.5 6.5 3C11 6.5 16 10.5 19.8 13.2C20.8 9 20.2 4 17.8 0.4Z"/></svg>
<div class="t" style="left:1342.5px;top:94.5px;font-size:23px;line-height:23px;color:#3c3c3c;">Enrolments…StudentView</div>
<svg style="left:1698px;top:94.5px;" width="24" height="21.5" viewBox="0 0 28.5 25.5"><path fill="#f0703b" d="M17.8 0.4C22.5 3.5 27 8.5 26.2 14.5C26 16.5 25.5 18 25 18.8C26.8 20.5 27.8 22.5 28.4 24.6C27 23.6 25.5 23.4 24.2 23.9C19 26.5 10 26.5 0.5 17C5.5 19.5 11.5 20 16.5 17.5C12 14 7 9.5 3.5 5C7.5 7.5 11 10 13.5 11.5C11 8.5 8.5 5.5 6.5 3C11 6.5 16 10.5 19.8 13.2C20.8 9 20.2 4 17.8 0.4Z"/></svg>
<div class="t" style="left:1734px;top:94.5px;font-size:23px;line-height:23px;color:#3c3c3c;">CoursesListView</div>
<svg style="left:1997px;top:94.5px;" width="24" height="21.5" viewBox="0 0 28.5 25.5"><path fill="#f0703b" d="M17.8 0.4C22.5 3.5 27 8.5 26.2 14.5C26 16.5 25.5 18 25 18.8C26.8 20.5 27.8 22.5 28.4 24.6C27 23.6 25.5 23.4 24.2 23.9C19 26.5 10 26.5 0.5 17C5.5 19.5 11.5 20 16.5 17.5C12 14 7 9.5 3.5 5C7.5 7.5 11 10 13.5 11.5C11 8.5 8.5 5.5 6.5 3C11 6.5 16 10.5 19.8 13.2C20.8 9 20.2 4 17.8 0.4Z"/></svg>
<div class="t" style="left:2032px;top:94.5px;font-size:23px;line-height:23px;color:#3c3c3c;">AddCourseView</div>
<svg style="left:2285px;top:94.5px;" width="24" height="21.5" viewBox="0 0 28.5 25.5"><path fill="#f0703b" d="M17.8 0.4C22.5 3.5 27 8.5 26.2 14.5C26 16.5 25.5 18 25 18.8C26.8 20.5 27.8 22.5 28.4 24.6C27 23.6 25.5 23.4 24.2 23.9C19 26.5 10 26.5 0.5 17C5.5 19.5 11.5 20 16.5 17.5C12 14 7 9.5 3.5 5C7.5 7.5 11 10 13.5 11.5C11 8.5 8.5 5.5 6.5 3C11 6.5 16 10.5 19.8 13.2C20.8 9 20.2 4 17.8 0.4Z"/></svg>
<div class="t" style="left:2320px;top:94.5px;font-size:23px;line-height:23px;color:#3c3c3c;">Course</div>
<svg style="left:2483px;top:94.5px;" width="24" height="21.5" viewBox="0 0 28.5 25.5"><path fill="#f0703b" d="M17.8 0.4C22.5 3.5 27 8.5 26.2 14.5C26 16.5 25.5 18 25 18.8C26.8 20.5 27.8 22.5 28.4 24.6C27 23.6 25.5 23.4 24.2 23.9C19 26.5 10 26.5 0.5 17C5.5 19.5 11.5 20 16.5 17.5C12 14 7 9.5 3.5 5C7.5 7.5 11 10 13.5 11.5C11 8.5 8.5 5.5 6.5 3C11 6.5 16 10.5 19.8 13.2C20.8 9 20.2 4 17.8 0.4Z"/></svg>
<div class="t" style="left:2518px;top:94.5px;font-size:23px;line-height:23px;color:#3c3c3c;">CoursesListViewModel</div>
<div class="a" style="left:1651px;top:95px;width:2px;height:23px;background:#e4e4e4"></div>
<div class="a" style="left:1949px;top:95px;width:2px;height:23px;background:#e4e4e4"></div>
<div class="a" style="left:2237px;top:95px;width:2px;height:23px;background:#e4e4e4"></div>
<div class="a" style="left:2434px;top:95px;width:2px;height:23px;background:#e4e4e4"></div>
<div class="a" style="left:2797px;top:95px;width:2px;height:23px;background:#e4e4e4"></div>
<div class="a" style="left:2842px;top:78px;width:2px;height:54px;background:#b8b8b8"></div>
<div class="a" style="left:2830px;top:78px;width:12px;height:54px;background:linear-gradient(270deg,rgba(0,0,0,0.09),rgba(0,0,0,0))"></div>
<div class="a" style="left:2844px;top:78px;width:180px;height:54px;background:#fff"></div>
<svg style="left:2858px;top:90px;" width="28" height="30" viewBox="0 0 28 30"><path d="M7 8.9H25.5M18.5 2.3L25.5 8.9L18.5 15.6M21 20.9H2.5M9.5 14.5L2.5 20.9L9.5 27.5" fill="none" stroke="#777" stroke-width="1.9" stroke-linecap="round" stroke-linejoin="round"/></svg>
<svg style="left:2905px;top:90px;" width="40" height="30" viewBox="0 0 40 30"><path d="M1 2.9H12.8M1 8.9H17M1 14.9H12.8M1 20.9H17M1 27H17" stroke="#777" stroke-width="1.9"/><rect x="21.8" y="2.8" width="14.8" height="24.4" fill="none" stroke="#777" stroke-width="1.9"/><rect x="26" y="6.8" width="6.6" height="16.4" fill="none" stroke="#777" stroke-width="1.9"/></svg>
<div class="a" style="left:2960px;top:95px;width:2px;height:23px;background:#e4e4e4"></div>
<svg style="left:2979px;top:90px;" width="29" height="30" viewBox="0 0 29 30"><rect x="1.3" y="2.3" width="25.6" height="25.2" rx="4.5" fill="none" stroke="#777" stroke-width="1.9"/><path d="M10.5 2.3V27.5M13.5 14.9H22.5M18 10.3V19.5" stroke="#777" stroke-width="1.9"/></svg>
<div class="a" style="left:684px;top:134px;width:2340px;height:54px;background:#fff"></div>
<div class="a" style="left:684px;top:188px;width:2340px;height:2px;background:#e4e4e4"></div>
<svg style="left:701px;top:148px;" width="25" height="25" viewBox="0 0 25 25"><g transform="scale(0.8620689655172413)"><rect x="0" y="0" width="29.5" height="29.5" rx="7" fill="#0b72f6"/><rect x="2.6" y="2.6" width="24.3" height="24.3" rx="5" fill="#1a83fc" stroke="#c4dbfb" stroke-width="1.6"/><g stroke="#fff" stroke-width="2.3" stroke-linecap="round" fill="none"><path d="M12.3 7.2L21.5 22.3"/><path d="M14.8 7.2L10.3 17.3"/><path d="M8.2 20.6L7.3 22.4"/><path d="M5.5 18.2H16.8M19 18.2H24"/><path d="M11.6 6.6H15.6"/></g></g></svg>
<div class="t" style="left:738.5px;top:150.3px;font-size:23.3px;line-height:23.3px;color:#262626;">StudentsAndCourses</div>
<svg style="left:971px;top:151px;" width="8" height="20" viewBox="0 0 8 20"><path d="M1.5 2L6 10L1.5 18" fill="none" stroke="#6e6e6e" stroke-width="1.8" stroke-linecap="round"/></svg>
<svg style="left:996px;top:150px;" width="25" height="21" viewBox="0 0 29 24"><path fill="#8b9095" d="M0 3.5Q0 0 3.5 0H9.5Q11 0 12 1.2L13.2 2.6H25.5Q29 2.6 29 6V20.5Q29 24 25.5 24H3.5Q0 24 0 20.5Z"/><rect x="0" y="5.6" width="29" height="1.6" fill="#f5f5f5"/></svg>
<div class="t" style="left:1032px;top:150.3px;font-size:23.3px;line-height:23.3px;color:#262626;">StudentsAndCourses</div>
<svg style="left:1265px;top:151px;" width="8" height="20" viewBox="0 0 8 20"><path d="M1.5 2L6 10L1.5 18" fill="none" stroke="#6e6e6e" stroke-width="1.8" stroke-linecap="round"/></svg>
<svg style="left:1290px;top:150px;" width="25" height="21" viewBox="0 0 29 24"><path fill="#8b9095" d="M0 3.5Q0 0 3.5 0H9.5Q11 0 12 1.2L13.2 2.6H25.5Q29 2.6 29 6V20.5Q29 24 25.5 24H3.5Q0 24 0 20.5Z"/><rect x="0" y="5.6" width="29" height="1.6" fill="#f5f5f5"/></svg>
<div class="t" style="left:1327px;top:150.3px;font-size:23.3px;line-height:23.3px;color:#262626;">Views</div>
<svg style="left:1399px;top:151px;" width="8" height="20" viewBox="0 0 8 20"><path d="M1.5 2L6 10L1.5 18" fill="none" stroke="#6e6e6e" stroke-width="1.8" stroke-linecap="round"/></svg>
<svg style="left:1423px;top:149.5px;" width="25" height="22.4" viewBox="0 0 28.5 25.5"><path fill="#f0703b" d="M17.8 0.4C22.5 3.5 27 8.5 26.2 14.5C26 16.5 25.5 18 25 18.8C26.8 20.5 27.8 22.5 28.4 24.6C27 23.6 25.5 23.4 24.2 23.9C19 26.5 10 26.5 0.5 17C5.5 19.5 11.5 20 16.5 17.5C12 14 7 9.5 3.5 5C7.5 7.5 11 10 13.5 11.5C11 8.5 8.5 5.5 6.5 3C11 6.5 16 10.5 19.8 13.2C20.8 9 20.2 4 17.8 0.4Z"/></svg>
<div class="t" style="left:1460.5px;top:150.3px;font-size:23.3px;line-height:23.3px;color:#262626;">EnrolmentsByCourseView</div>
<svg style="left:1740px;top:151px;" width="8" height="20" viewBox="0 0 8 20"><path d="M1.5 2L6 10L1.5 18" fill="none" stroke="#6e6e6e" stroke-width="1.8" stroke-linecap="round"/></svg>
<svg style="left:1764px;top:148px;" width="28" height="25" viewBox="0 0 28 25"><rect x="0" y="0" width="28" height="25" rx="5" fill="#4db8d1"/><text x="14" y="19.5" font-family="Liberation Sans" font-weight="bold" font-size="19" fill="#fff" text-anchor="middle">P</text></svg>
<div class="t" style="left:1802px;top:150.3px;font-size:23.3px;line-height:23.3px;color:#262626;">viewModel</div>
<svg style="left:2933px;top:151px;" width="10" height="20" viewBox="0 0 10 20"><path d="M8.5 2L2 10L8.5 18" fill="none" stroke="#6e6e6e" stroke-width="2" stroke-linecap="round" stroke-linejoin="round"/></svg>
<svg style="left:2958px;top:149px;" width="24" height="24" viewBox="0 0 24 24"><circle cx="12" cy="12" r="11.5" fill="#c9302c"/><path d="M8 8L16 16M16 8L8 16" stroke="#fff" stroke-width="2.6" stroke-linecap="round"/></svg>
<svg style="left:2991px;top:151px;" width="10" height="20" viewBox="0 0 10 20"><path d="M1.5 2L8 10L1.5 18" fill="none" stroke="#6e6e6e" stroke-width="2" stroke-linecap="round" stroke-linejoin="round"/></svg>
<div class="a" style="left:684px;top:190px;width:1595px;height:1642px;background:#fff"></div>
<div class="a" style="left:684px;top:672px;width:1595px;height:40px;background:#edf3fe"></div>
<div class="a" style="left:2279px;top:190px;width:2px;height:1642px;background:#ececec"></div>
<div class="a" style="left:2281px;top:190px;width:26px;height:1642px;background:#f9f9f9"></div>
<div class="a" style="left:2307px;top:190px;width:3px;height:1642px;background:#e6e6e6"></div>
<div class="a" style="left:2287px;top:196px;width:16px;height:1264px;background:#7f7f7f;border-radius:8px"></div>
<div class="a" style="left:782px;top:194px;width:14px;height:236px;background:#e6e6e6;border-radius:7px;box-shadow:0 0 0 1.3px #fff"></div>
<div class="a" style="left:782px;top:554px;width:14px;height:716px;background:#e8e8e8;border-radius:7px;box-shadow:0 0 0 1.3px #fff"></div>
<div class="a" style="left:782px;top:794px;width:14px;height:436px;background:#d2d2d2;border-radius:7px;box-shadow:0 0 0 1.3px #fff"></div>
<div class="a" style="left:782px;top:834px;width:14px;height:316px;background:#bdbdbd;border-radius:7px;box-shadow:0 0 0 1.3px #fff"></div>
<div class="a" style="left:782px;top:874px;width:14px;height:236px;background:#a9a9a9;border-radius:7px;box-shadow:0 0 0 1.3px #fff"></div>
<div class="a" style="left:782px;top:1314px;width:14px;height:196px;background:#e6e6e6;border-radius:7px;box-shadow:0 0 0 1.3px #fff"></div>
<div class="a" style="left:782px;top:1354px;width:14px;height:116px;background:#d2d2d2;border-radius:7px;box-shadow:0 0 0 1.3px #fff"></div>
<div class="a" style="left:782px;top:672px;width:14px;height:40px;background:rgba(30,80,160,0.06)"></div>
<div class="a" style="left:694px;top:592px;width:10px;height:200px;background:#afcbfa;border:2px solid #2b78f6;border-radius:5px"></div>
<div class="a" style="left:694px;top:832px;width:10px;height:40px;background:#afcbfa;border:2px solid #2b78f6;border-radius:5px"></div>
<div class="a" style="left:694px;top:912px;width:10px;height:40px;background:#afcbfa;border:2px solid #2b78f6;border-radius:5px"></div>
<div class="a" style="left:694px;top:992px;width:10px;height:40px;background:#afcbfa;border:2px solid #2b78f6;border-radius:5px"></div>
<div class="a" style="left:694px;top:1392px;width:10px;height:40px;background:#afcbfa;border:2px solid #2b78f6;border-radius:5px"></div>
<div class="t" style="left:601px;width:172px;text-align:right;top:195px;font-size:28px;line-height:40px;color:#a3a3a3">1</div>
<div class="t" style="left:601px;width:172px;text-align:right;top:235px;font-size:28px;line-height:40px;color:#a3a3a3">2</div>
<div class="t" style="left:601px;width:172px;text-align:right;top:275px;font-size:28px;line-height:40px;color:#a3a3a3">3</div>
<div class="t" style="left:601px;width:172px;text-align:right;top:315px;font-size:28px;line-height:40px;color:#a3a3a3">4</div>
<div class="t" style="left:601px;width:172px;text-align:right;top:355px;font-size:28px;line-height:40px;color:#a3a3a3">5</div>
<div class="t" style="left:601px;width:172px;text-align:right;top:395px;font-size:28px;line-height:40px;color:#a3a3a3">6</div>
<div class="t" style="left:601px;width:172px;text-align:right;top:435px;font-size:28px;line-height:40px;color:#a3a3a3">7</div>
<div class="t" style="left:601px;width:172px;text-align:right;top:475px;font-size:28px;line-height:40px;color:#a3a3a3">8</div>
<div class="t" style="left:601px;width:172px;text-align:right;top:515px;font-size:28px;line-height:40px;color:#a3a3a3">9</div>
<div class="t" style="left:601px;width:172px;text-align:right;top:555px;font-size:28px;line-height:40px;color:#a3a3a3">10</div>
<div class="t" style="left:601px;width:172px;text-align:right;top:595px;font-size:28px;line-height:40px;color:#a3a3a3">11</div>
<div class="t" style="left:601px;width:172px;text-align:right;top:635px;font-size:28px;line-height:40px;color:#a3a3a3">12</div>
<div class="t" style="left:601px;width:172px;text-align:right;top:675px;font-size:28px;line-height:40px;color:#1a1a1a">13</div>
<div class="t" style="left:601px;width:172px;text-align:right;top:715px;font-size:28px;line-height:40px;color:#a3a3a3">14</div>
<div class="t" style="left:601px;width:172px;text-align:right;top:755px;font-size:28px;line-height:40px;color:#a3a3a3">15</div>
<div class="t" style="left:601px;width:172px;text-align:right;top:795px;font-size:28px;line-height:40px;color:#a3a3a3">16</div>
<div class="t" style="left:601px;width:172px;text-align:right;top:835px;font-size:28px;line-height:40px;color:#a3a3a3">17</div>
<div class="t" style="left:601px;width:172px;text-align:right;top:875px;font-size:28px;line-height:40px;color:#a3a3a3">18</div>
<div class="t" style="left:601px;width:172px;text-align:right;top:915px;font-size:28px;line-height:40px;color:#a3a3a3">19</div>
<div class="t" style="left:601px;width:172px;text-align:right;top:955px;font-size:28px;line-height:40px;color:#a3a3a3">20</div>
<div class="t" style="left:601px;width:172px;text-align:right;top:995px;font-size:28px;line-height:40px;color:#a3a3a3">21</div>
<div class="t" style="left:601px;width:172px;text-align:right;top:1035px;font-size:28px;line-height:40px;color:#a3a3a3">22</div>
<div class="t" style="left:601px;width:172px;text-align:right;top:1075px;font-size:28px;line-height:40px;color:#a3a3a3">23</div>
<div class="t" style="left:601px;width:172px;text-align:right;top:1115px;font-size:28px;line-height:40px;color:#a3a3a3">24</div>
<div class="t" style="left:601px;width:172px;text-align:right;top:1155px;font-size:28px;line-height:40px;color:#a3a3a3">25</div>
<div class="t" style="left:601px;width:172px;text-align:right;top:1195px;font-size:28px;line-height:40px;color:#a3a3a3">26</div>
<div class="t" style="left:601px;width:172px;text-align:right;top:1235px;font-size:28px;line-height:40px;color:#a3a3a3">27</div>
<div class="t" style="left:601px;width:172px;text-align:right;top:1275px;font-size:28px;line-height:40px;color:#a3a3a3">28</div>
<div class="t" style="left:601px;width:172px;text-align:right;top:1315px;font-size:28px;line-height:40px;color:#a3a3a3">29</div>
<div class="t" style="left:601px;width:172px;text-align:right;top:1355px;font-size:28px;line-height:40px;color:#a3a3a3">30</div>
<div class="t" style="left:601px;width:172px;text-align:right;top:1395px;font-size:28px;line-height:40px;color:#a3a3a3">31</div>
<div class="t" style="left:601px;width:172px;text-align:right;top:1435px;font-size:28px;line-height:40px;color:#a3a3a3">32</div>
<div class="t" style="left:601px;width:172px;text-align:right;top:1475px;font-size:28px;line-height:40px;color:#a3a3a3">33</div>
<div class="t" style="left:601px;width:172px;text-align:right;top:1515px;font-size:28px;line-height:40px;color:#a3a3a3">34</div>
<div class="t m" style="left:821px;top:194px;font-size:30.75px;line-height:40px;color:#262626"><span style="color:#6c7986">//</span></div>
<div class="t m" style="left:821px;top:234px;font-size:30.75px;line-height:40px;color:#262626"><span style="color:#6c7986">//  EnrolmentsByCourseView.swift</span></div>
<div class="t m" style="left:821px;top:274px;font-size:30.75px;line-height:40px;color:#262626"><span style="color:#6c7986">//  StudentsAndCourses</span></div>
<div class="t m" style="left:821px;top:314px;font-size:30.75px;line-height:40px;color:#262626"><span style="color:#6c7986">//</span></div>
<div class="t m" style="left:821px;top:354px;font-size:30.75px;line-height:40px;color:#262626"><span style="color:#6c7986">//  Created by Russell Gordon on 2024-06-09.</span></div>
<div class="t m" style="left:821px;top:394px;font-size:30.75px;line-height:40px;color:#262626"><span style="color:#6c7986">//</span></div>
<div class="t m" style="left:821px;top:474px;font-size:30.75px;line-height:40px;color:#262626"><span style="color:#9b2393;font-weight:bold">import</span> SwiftUI</div>
<div class="t m" style="left:821px;top:554px;font-size:30.75px;line-height:40px;color:#262626"><span style="color:#9b2393;font-weight:bold">struct</span> <span style="color:#0b4f79">EnrolmentsByCourseView</span>: <span style="color:#3900a0">View</span> {</div>
<div class="t m" style="left:821px;top:634px;font-size:30.75px;line-height:40px;color:#262626">    <span style="color:#6c7986">// </span><span style="color:#4a5560;font-weight:bold">MARK: Stored properties</span></div>
<div class="t m" style="left:821px;top:674px;font-size:30.75px;line-height:40px;color:#262626">    <span style="color:#9b2393;font-weight:bold">let</span> <span style="color:#0f68a0">viewModel</span>: <span style="color:#23535a">EnrolmentsByCourseViewModel</span></div>
<div class="t m" style="left:821px;top:754px;font-size:30.75px;line-height:40px;color:#262626">    <span style="color:#6c7986">// </span><span style="color:#4a5560;font-weight:bold">MARK: Computed properties</span></div>
<div class="t m" style="left:821px;top:794px;font-size:30.75px;line-height:40px;color:#262626">    <span style="color:#9b2393;font-weight:bold">var</span> <span style="color:#0f68a0">body</span>: <span style="color:#9b2393;font-weight:bold">some</span> <span style="color:#3900a0">View</span> {</div>
<div class="t m" style="left:821px;top:834px;font-size:30.75px;line-height:40px;color:#262626">        <span style="color:#3900a0">List</span>(<span style="color:#326d74">viewModel</span>.<span style="color:#326d74">coursesWithStudents</span>) { course <span style="color:#9b2393;font-weight:bold">in</span></div>
<div class="t m" style="left:821px;top:874px;font-size:30.75px;line-height:40px;color:#262626">            <span style="color:#3900a0">VStack</span>(<span style="color:#6c36a9">alignment</span>: .<span style="color:#6c36a9">leading</span>) {</div>
<div class="t m" style="left:821px;top:914px;font-size:30.75px;line-height:40px;color:#262626">                <span style="color:#3900a0">Text</span>(course.shortCode)</div>
<div class="t m" style="left:821px;top:954px;font-size:30.75px;line-height:40px;color:#262626">                    .<span style="color:#6c36a9">bold</span>()</div>
<div class="t m" style="left:821px;top:994px;font-size:30.75px;line-height:40px;color:#262626">                <span style="color:#3900a0">Text</span>(course.name)</div>
<div class="t m" style="left:821px;top:1034px;font-size:30.75px;line-height:40px;color:#262626">                    .<span style="color:#6c36a9">font</span>(.<span style="color:#6c36a9">subheadline</span>)</div>
<div class="t m" style="left:821px;top:1074px;font-size:30.75px;line-height:40px;color:#262626">            }</div>
<div class="t m" style="left:821px;top:1114px;font-size:30.75px;line-height:40px;color:#262626">        }</div>
<div class="t m" style="left:821px;top:1154px;font-size:30.75px;line-height:40px;color:#262626">        .<span style="color:#6c36a9">navigationTitle</span>(<span style="color:#c41a16">&quot;Courses&quot;</span>)</div>
<div class="t m" style="left:821px;top:1194px;font-size:30.75px;line-height:40px;color:#262626">    }</div>
<div class="t m" style="left:821px;top:1234px;font-size:30.75px;line-height:40px;color:#262626">}</div>
<div class="t m" style="left:821px;top:1314px;font-size:30.75px;line-height:40px;color:#262626"><span style="color:#6c36a9">#Preview</span> {</div>
<div class="t m" style="left:821px;top:1354px;font-size:30.75px;line-height:40px;color:#262626">    <span style="color:#3900a0">NavigationStack</span> {</div>
<div class="t m" style="left:821px;top:1394px;font-size:30.75px;line-height:40px;color:#262626">        <span style="color:#23535a">EnrolmentsByCourseView</span>(<span style="color:#326d74">viewModel</span>: <span style="color:#23535a">EnrolmentsByCourseViewModel</span>())</div>
<div class="t m" style="left:821px;top:1434px;font-size:30.75px;line-height:40px;color:#262626">    }</div>
<div class="t m" style="left:821px;top:1474px;font-size:30.75px;line-height:40px;color:#262626">}</div>
<div class="a" style="left:684px;top:1832px;width:2340px;height:2px;background:#e4e4e4"></div>
<div class="a" style="left:684px;top:1834px;width:2340px;height:54px;background:#fff"></div>
<svg style="left:707px;top:1852px;" width="30" height="18" viewBox="0 0 30 18"><path d="M3.5 0H23.5Q24.8 0 25.6 1.2L29.6 8Q30.2 9 29.6 10L25.6 16.8Q24.8 18 23.5 18H3.5Q0 18 0 14.5V3.5Q0 0 3.5 0Z" fill="#3478f6"/></svg>
<div class="a" style="left:752px;top:1849px;width:2px;height:23px;background:#e0e0e0"></div>
<svg style="left:774px;top:1847px;" width="21" height="28" viewBox="0 0 21 28"><rect x="1.8" y="1.5" width="5" height="25" rx="2" fill="none" stroke="#6e6e6e" stroke-width="1.7"/><rect x="13.8" y="1.5" width="5" height="25" rx="2" fill="none" stroke="#6e6e6e" stroke-width="1.7"/></svg>
<svg style="left:830px;top:1846px;" width="29" height="30" viewBox="0 0 29 30"><path d="M1.5 19.4L13.6 6.6L26 19M18 19.2H26V11" fill="none" stroke="#b9b9b9" stroke-width="1.7"/><rect x="5.3" y="22.7" width="17.3" height="4.8" fill="none" stroke="#b9b9b9" stroke-width="1.7"/></svg>
<svg style="left:894px;top:1846px;" width="20" height="30" viewBox="0 0 20 30"><path d="M9.8 2V19.5M3.2 13L9.8 19.5L16.3 13" fill="none" stroke="#b9b9b9" stroke-width="1.7"/><rect x="1.5" y="22.7" width="17.3" height="4.8" fill="none" stroke="#b9b9b9" stroke-width="1.7"/></svg>
<svg style="left:954px;top:1846px;" width="20" height="30" viewBox="0 0 20 30"><path d="M10 19V2.5M3.3 9.5L10 2.5L16.7 9.5" fill="none" stroke="#b9b9b9" stroke-width="1.7"/><rect x="1.5" y="22.7" width="17.3" height="4.8" fill="none" stroke="#b9b9b9" stroke-width="1.7"/></svg>
<div class="a" style="left:993px;top:1849px;width:2px;height:23px;background:#e0e0e0"></div>
<svg style="left:1012px;top:1845px;" width="28" height="32" viewBox="0 0 28 32"><g fill="none" stroke="#777" stroke-width="1.8" stroke-linejoin="round"><path d="M3.5 23.8V9.6L16.5 3.4M7.8 26.3V11.6L20.5 6.5"/><path d="M12.2 14.5L24.6 9V23.8L12.2 28.8Z"/></g></svg>
<svg style="left:1071px;top:1847px;" width="29" height="27" viewBox="0 0 29 27"><circle cx="6" cy="4.8" r="4" fill="none" stroke="#777" stroke-width="1.8"/><circle cx="6" cy="21.2" r="4" fill="none" stroke="#777" stroke-width="1.8"/><circle cx="22.5" cy="13" r="4" fill="none" stroke="#777" stroke-width="1.8"/><path d="M9.6 6.6L18.9 11.2M9.6 19.4L18.9 14.8" stroke="#777" stroke-width="1.8"/></svg>
<svg style="left:1134px;top:1846px;" width="25" height="30" viewBox="0 0 25 30"><rect x="2" y="2.5" width="20.8" height="10.8" rx="5.4" fill="none" stroke="#777" stroke-width="1.8"/><rect x="2" y="16.6" width="20.8" height="10.8" rx="5.4" fill="none" stroke="#777" stroke-width="1.8"/><circle cx="6.9" cy="7.9" r="2.6" fill="#777"/><circle cx="17.2" cy="22" r="2.6" fill="#777"/></svg>
<svg style="left:1190px;top:1845px;" width="32" height="32" viewBox="0 0 32 32"><path d="M28.7 3.4L3.9 13.9L17.6 15.9L18.2 27.9Z" fill="none" stroke="#777" stroke-width="1.9" stroke-linejoin="round"/></svg>
<div class="a" style="left:1236px;top:1849px;width:2px;height:23px;background:#e0e0e0"></div>
<svg style="left:1255px;top:1849px;" width="24" height="24" viewBox="0 0 24 24"><g transform="scale(0.8275862068965517)"><rect x="0" y="0" width="29" height="29" rx="6" fill="#6e6e6e"/><g stroke="#fff" stroke-width="2.3" stroke-linecap="round" fill="none"><path d="M12.3 7.2L21.5 22.3"/><path d="M14.8 7.2L10.3 17.3"/><path d="M8.2 20.6L7.3 22.4"/><path d="M5.5 18.2H16.8M19 18.2H24"/><path d="M11.6 6.6H15.6"/></g></g></svg>
<div class="t" style="left:1292px;top:1848.3px;font-size:23.3px;line-height:23.3px;color:#262626;">StudentsAndCourses</div>
<div class="t" style="left:2775px;top:1849.7px;font-size:24px;line-height:24px;color:#7d7d7d;">Line: 13  Col: 6</div>
<div class="a" style="left:2954px;top:1848px;width:2px;height:25px;background:#e4e4e4"></div>
<svg style="left:2973px;top:1848px;" width="27" height="26" viewBox="0 0 27 26"><rect x="1.2" y="1.2" width="24.6" height="23.6" rx="5" fill="none" stroke="#777" stroke-width="2.2"/><rect x="5" y="17" width="17" height="5" rx="2" fill="#808080"/></svg>
<div class="a" style="left:2310px;top:190px;width:714px;height:1642px;background:#f1f1f1"></div>
<div class="a" style="left:2335px;top:214px;width:63px;height:52px;background:#fff;border-radius:12px;box-shadow:0 0 0 0.5px rgba(0,0,0,0.06),0 2px 8px rgba(0,0,0,0.14);"></div>
<svg style="left:2354px;top:223px;" width="25" height="34" viewBox="0 0 25 34"><path d="M4.2 2.8H20Q21 3 19.8 4.2L15.3 7.2L15.8 13.8Q21.5 16 21.8 21.2Q22 21.8 21.2 21.8H3Q2.2 21.8 2.3 21.2Q2.6 16 8.8 13.8L9.3 7.2L4.6 4.2Q3.4 3 4.2 2.8Z" fill="none" stroke="#3c3c3c" stroke-width="2" stroke-linejoin="round"/><path d="M12.2 22V31.5" stroke="#3c3c3c" stroke-width="2" stroke-linecap="round"/></svg>
<div class="a" style="left:2418px;top:214px;width:337px;height:52px;background:#cfe0fb;border-radius:12px;box-shadow:0 0 0 0.5px rgba(0,0,0,0.06),0 2px 8px rgba(0,0,0,0.14);"></div>
<svg style="left:2436px;top:229px;" width="23" height="23" viewBox="0 0 23 23"><path d="M6.7 0H16.3L23 6.7V16.3L16.3 23H6.7L0 16.3V6.7Z" fill="#e8473b"/><path d="M7.5 7.5L15.5 15.5M15.5 7.5L7.5 15.5" stroke="#dfe9fb" stroke-width="1.8" stroke-linecap="round"/></svg>
<div class="t" style="left:2470.5px;top:230.3px;font-size:23.3px;line-height:23.3px;color:#3478f6;">EnrolmentsByCourseView</div>
<div class="a" style="left:2342px;top:587px;width:9px;height:48px;background:#2f2f2f;border-radius:2px"></div>
<div class="a" style="left:2342px;top:679px;width:9px;height:93px;background:#2f2f2f;border-radius:2px"></div>
<div class="a" style="left:2342px;top:797px;width:9px;height:92px;background:#2f2f2f;border-radius:2px"></div>
<div class="a" style="left:2984px;top:739px;width:8px;height:150px;background:#2f2f2f;border-radius:2px"></div>
<svg style="left:2330px;top:330px;" width="680" height="1360" viewBox="0 0 680 1360"><path d="M183.07 17.50L491.93 17.50C539.03 17.50 562.58 17.50 587.93 25.52C615.61 35.59 637.41 57.39 647.48 85.07C655.50 110.42 655.50 133.97 655.50 181.07L655.50 1180.43C655.50 1227.53 655.50 1251.08 647.48 1276.43C637.41 1304.11 615.61 1325.91 587.93 1335.98C562.58 1344.00 539.03 1344.00 491.93 1344.00L183.07 1344.00C135.97 1344.00 112.42 1344.00 87.07 1335.98C59.39 1325.91 37.59 1304.11 27.52 1276.43C19.50 1251.08 19.50 1227.53 19.50 1180.43L19.50 181.07C19.50 133.97 19.50 110.42 27.52 85.07C37.59 57.39 59.39 35.59 87.07 25.52C112.42 17.50 135.97 17.50 183.07 17.50Z" fill="#2d2d2d" stroke="#5a5a5a" stroke-width="1"/><path d="M176.28 26.00L498.72 26.00C541.42 26.00 562.77 26.00 585.75 33.27C610.84 42.40 630.60 62.16 639.73 87.25C647.00 110.23 647.00 131.58 647.00 174.28L647.00 1187.72C647.00 1230.42 647.00 1251.77 639.73 1274.75C630.60 1299.84 610.84 1319.60 585.75 1328.73C562.77 1336.00 541.42 1336.00 498.72 1336.00L176.28 1336.00C133.58 1336.00 112.23 1336.00 89.25 1328.73C64.16 1319.60 44.40 1299.84 35.27 1274.75C28.00 1251.77 28.00 1230.42 28.00 1187.72L28.00 174.28C28.00 131.58 28.00 110.23 35.27 87.25C44.40 62.16 64.16 42.40 89.25 33.27C112.23 26.00 133.58 26.00 176.28 26.00Z" fill="#000"/><path d="M169.88 41.40L505.12 41.40C541.66 41.40 559.92 41.40 579.59 47.62C601.06 55.43 617.97 72.34 625.78 93.81C632.00 113.48 632.00 131.74 632.00 168.28L632.00 1192.72C632.00 1229.26 632.00 1247.52 625.78 1267.19C617.97 1288.66 601.06 1305.57 579.59 1313.38C559.92 1319.60 541.66 1319.60 505.12 1319.60L169.88 1319.60C133.34 1319.60 115.08 1319.60 95.41 1313.38C73.94 1305.57 57.03 1288.66 49.22 1267.19C43.00 1247.52 43.00 1229.26 43.00 1192.72L43.00 168.28C43.00 131.74 43.00 113.48 49.22 93.81C57.03 72.34 73.94 55.43 95.41 47.62C115.08 41.40 133.34 41.40 169.88 41.40Z" fill="#f2f2f7"/></svg>
<div class="a" style="left:2574px;top:388px;width:188px;height:55.5px;background:#000;border-radius:28px"></div>
<div class="t" style="left:2398px;top:531.1px;font-size:49.5px;line-height:49.5px;color:#000;font-weight:bold">Courses</div>
<div class="a" style="left:2403px;top:597px;width:528px;height:281px;background:#fff;border-radius:21px"></div>
<div class="t" style="left:2434px;top:616.4px;font-size:25.5px;line-height:25.5px;color:#000;font-weight:bold">ADA3M</div>
<div class="t" style="left:2434px;top:649.5px;font-size:23px;line-height:23px;color:#000;">Drama</div>
<div class="a" style="left:2434px;top:690px;width:497px;height:1.5px;background:#dedee3"></div>
<div class="t" style="left:2434px;top:710.4px;font-size:25.5px;line-height:25.5px;color:#000;font-weight:bold">AMU3M</div>
<div class="t" style="left:2434px;top:743.5px;font-size:23px;line-height:23px;color:#000;">Music</div>
<div class="a" style="left:2434px;top:784px;width:497px;height:1.5px;background:#dedee3"></div>
<div class="t" style="left:2434px;top:804.4px;font-size:25.5px;line-height:25.5px;color:#000;font-weight:bold">AVI3M</div>
<div class="t" style="left:2434px;top:837.5px;font-size:23px;line-height:23px;color:#000;">Visual Arts</div>
<div class="a" style="left:2335px;top:330px;width:665px;height:80px;background:#fff;border-radius:14px;box-shadow:0 0 0 0.5px rgba(0,0,0,0.06),0 2px 8px rgba(0,0,0,0.14);"></div>
<svg style="left:2354px;top:349px;" width="43" height="43" viewBox="0 0 43 43"><path d="M12.6 0H30.4L43 12.6V30.4L30.4 43H12.6L0 30.4V12.6Z" fill="#c0271b"/><path d="M14 14L29 29M29 14L14 29" stroke="#fff" stroke-width="4.6" stroke-linecap="round"/></svg>
<div class="t" style="left:2416px;top:357.1px;font-size:27px;line-height:27px;color:#474747;font-weight:bold">Failed to build the scheme...</div>
<svg style="left:2876px;top:350px;" width="42" height="38" viewBox="0 0 42 38"><g fill="none" stroke="#777" stroke-width="1.9" stroke-linecap="round"><path d="M10.8 8.1Q6 8.3 5.6 12.8Q6.5 22.8 14.3 23.6Q22.3 22.8 23.1 12.8Q22.8 8.3 17.7 8.1"/><path d="M14.3 23.6Q14.2 33.4 19.8 33.4Q25.2 33.2 26.2 25Q27.2 17.4 30.5 17.3Q34.3 17.5 34.9 24.6"/><circle cx="34.9" cy="28.3" r="3.6"/></g><circle cx="10.8" cy="8.1" r="1.7" fill="#777"/><circle cx="17.7" cy="8.1" r="1.7" fill="#777"/></svg>
<svg style="left:2948px;top:352px;" width="30" height="35" viewBox="0 0 30 35"><g fill="none" stroke="#777" stroke-width="1.9" stroke-linecap="round" stroke-linejoin="round"><path d="M14.2 10.3A10.4 10.4 0 1 0 24.6 20.5"/><path d="M13.6 4.8L19.6 10.7L13.6 16.6"/></g></svg>
<div class="a" style="left:2335px;top:1756px;width:163px;height:52px;background:#fff;border-radius:14px;box-shadow:0 0 0 0.5px rgba(0,0,0,0.06),0 2px 8px rgba(0,0,0,0.14);"></div>
<svg style="left:2353px;top:1769px;" width="26" height="26" viewBox="0 0 26 26"><circle cx="13" cy="13" r="13" fill="#3478f6"/><path d="M10 7.5V18.5L19 13Z" fill="#fff"/></svg>
<svg style="left:2401px;top:1769px;" width="24" height="24" viewBox="0 0 24 24"><rect x="1" y="1" width="22" height="22" rx="3" fill="none" stroke="#555" stroke-width="2"/><path d="M8 6L16.5 13L12.5 13.5L14.5 18L12.8 18.8L10.8 14.3L8 17Z" fill="#555"/></svg>
<svg style="left:2455px;top:1772px;" width="24" height="22" viewBox="0 0 24 22"><g fill="none" stroke="#555" stroke-width="1.8"><rect x="1" y="1" width="5" height="8" rx="1"/><rect x="9.5" y="1" width="5" height="8" rx="1"/><rect x="18" y="1" width="5" height="8" rx="1"/><rect x="1" y="13" width="5" height="8" rx="1"/><rect x="9.5" y="13" width="5" height="8" rx="1"/><rect x="18" y="13" width="5" height="8" rx="1"/></g></svg>
<div class="a" style="left:2518px;top:1756px;width:63px;height:52px;background:#fff;border-radius:14px;box-shadow:0 0 0 0.5px rgba(0,0,0,0.06),0 2px 8px rgba(0,0,0,0.14);"></div>
<svg style="left:2537px;top:1770px;" width="25" height="25" viewBox="0 0 25 25"><rect x="1" y="1" width="23" height="10" rx="5" fill="none" stroke="#555" stroke-width="2"/><circle cx="6" cy="6" r="2.6" fill="#555"/><rect x="0" y="14" width="25" height="11" rx="5.5" fill="#555"/><circle cx="19" cy="19.5" r="3" fill="#fff"/></svg>
<div class="a" style="left:2601px;top:1756px;width:54px;height:52px;background:#fff;border-radius:14px;box-shadow:0 0 0 0.5px rgba(0,0,0,0.06),0 2px 8px rgba(0,0,0,0.14);"></div>
<svg style="left:2620px;top:1771px;" width="15" height="23" viewBox="0 0 15 23"><rect x="1" y="1" width="13" height="21" rx="2.5" fill="#d5d5d5" stroke="#555" stroke-width="2"/><path d="M5.5 3.5H9.5M5.5 19H9.5" stroke="#555" stroke-width="1.3"/></svg>
<div class="a" style="left:2792px;top:1756px;width:208px;height:52px;background:#fff;border-radius:14px;box-shadow:0 0 0 0.5px rgba(0,0,0,0.06),0 2px 8px rgba(0,0,0,0.14);"></div>
<svg style="left:2810px;top:1770px;" width="26" height="26" viewBox="0 0 26 26"><circle cx="10.5" cy="10.5" r="9" fill="none" stroke="#3c3c3c" stroke-width="2.4"/><path d="M17 17L24 24" stroke="#3c3c3c" stroke-width="3" stroke-linecap="round"/><path d="M6.5 10.5H14.5" stroke="#3c3c3c" stroke-width="2.2" stroke-linecap="round"/></svg>
<svg style="left:2858px;top:1770px;" width="26" height="26" viewBox="0 0 26 26"><circle cx="10.5" cy="10.5" r="9" fill="none" stroke="#3c3c3c" stroke-width="2.4"/><path d="M17 17L24 24" stroke="#3c3c3c" stroke-width="3" stroke-linecap="round"/><path d="M8.5 8L11 6V15" fill="none" stroke="#3c3c3c" stroke-width="2" stroke-linecap="round" stroke-linejoin="round"/></svg>
<svg style="left:2906px;top:1770px;" width="26" height="26" viewBox="0 0 26 26"><circle cx="10.5" cy="10.5" r="9" fill="none" stroke="#3c3c3c" stroke-width="2.4"/><path d="M17 17L24 24" stroke="#3c3c3c" stroke-width="3" stroke-linecap="round"/><rect x="7" y="7" width="7" height="7" rx="1" fill="none" stroke="#3c3c3c" stroke-width="2"/></svg>
<svg style="left:2954px;top:1770px;" width="26" height="26" viewBox="0 0 26 26"><circle cx="10.5" cy="10.5" r="9" fill="none" stroke="#3c3c3c" stroke-width="2.4"/><path d="M17 17L24 24" stroke="#3c3c3c" stroke-width="3" stroke-linecap="round"/><path d="M6.5 10.5H14.5M10.5 6.5V14.5" stroke="#3c3c3c" stroke-width="2.2" stroke-linecap="round"/></svg>
</div></body></html>
